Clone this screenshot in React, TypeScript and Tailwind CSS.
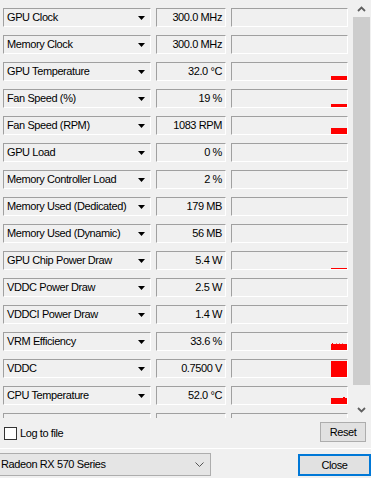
import React from 'react';

type Graph = 'none' | 'temp' | 'fan' | 'rpm' | 'line' | 'vrm' | 'vddc' | 'cpu';

const sensors: { label: string; value: string; graph: Graph }[] = [
    { label: 'GPU Clock', value: '300.0 MHz', graph: 'none' },
    { label: 'Memory Clock', value: '300.0 MHz', graph: 'none' },
    { label: 'GPU Temperature', value: '32.0 °C', graph: 'temp' },
    { label: 'Fan Speed (%)', value: '19 %', graph: 'fan' },
    { label: 'Fan Speed (RPM)', value: '1083 RPM', graph: 'rpm' },
    { label: 'GPU Load', value: '0 %', graph: 'none' },
    { label: 'Memory Controller Load', value: '2 %', graph: 'none' },
    { label: 'Memory Used (Dedicated)', value: '179 MB', graph: 'none' },
    { label: 'Memory Used (Dynamic)', value: '56 MB', graph: 'none' },
    { label: 'GPU Chip Power Draw', value: '5.4 W', graph: 'line' },
    { label: 'VDDC Power Draw', value: '2.5 W', graph: 'none' },
    { label: 'VDDCI Power Draw', value: '1.4 W', graph: 'none' },
    { label: 'VRM Efficiency', value: '33.6 %', graph: 'vrm' },
    { label: 'VDDC', value: '0.7500 V', graph: 'vddc' },
    { label: 'CPU Temperature', value: '52.0 °C', graph: 'cpu' },
    { label: 'System Memory Used', value: '4178 MB', graph: 'none' },
];

const sunken = 'h-[19px] border border-t-[#a0a0a0] border-l-[#a0a0a0] border-r-white border-b-white bg-[#f0f0f0]';

function GraphFill({ kind }: { kind: Graph }) {
    // 16px wide history strip at the right edge of the graph box
    if (kind === 'none') return null;
    if (kind === 'vrm') {
        return (
            <svg width="16" height="17" viewBox="0 0 16 17" className="block">
                <polygon
                    points="0,11 1,11 1,10 2,10 2,11 5,11 5,10 6,11 8,11 8,10 9,11 11,11 11,10 12,11 16,11 16,17 0,17"
                    fill="#ff0000"
                />
            </svg>
        );
    }
    if (kind === 'cpu') {
        return (
            <svg width="16" height="17" viewBox="0 0 16 17" className="block">
                <polygon points="0,11 12,11 12,10 14,10 14,11 16,11 16,17 0,17" fill="#ff0000" />
            </svg>
        );
    }
    const h = { temp: 'h-[4px]', fan: 'h-[3px]', rpm: 'h-[6px]', line: 'h-[1px]', vddc: 'h-[16px]' }[kind];
    return <div className={`w-[16px] bg-[#ff0000] ${h}`} />;
}

function Chevron({ up }: { up?: boolean }) {
    return (
        <svg width="9" height="6" viewBox="0 0 9 6" className="block">
            <path
                d={up ? 'M1 5 L4.5 1.5 L8 5' : 'M1 1 L4.5 4.5 L8 1'}
                fill="none"
                stroke="#606060"
                strokeWidth="1.8"
            />
        </svg>
    );
}

export default function App() {
    return (
        <div
            className="w-[371px] h-[478px] overflow-hidden bg-[#f0f0f0] text-black text-[11px] tracking-[-0.4px] leading-none"
            style={{ fontFamily: '"Liberation Sans", Arial, sans-serif' }}
        >
            {/* Sensor list */}
            <div className="flex h-[418px]">
                <div className="w-[352px] overflow-hidden pt-[8px] pl-[3px] flex flex-col gap-[8px]">
                    {sensors.map((s) => (
                        <div key={s.label} className="flex shrink-0">
                            <div className={`${sunken} w-[148px] flex items-center justify-between pl-[3px] pr-[5px]`}>
                                <span className="whitespace-nowrap">{s.label}</span>
                                <svg width="7" height="4" viewBox="0 0 7 4" className="block">
                                    <polygon points="0,0 7,0 3.5,4" fill="#000" />
                                </svg>
                            </div>
                            <div className={`${sunken} ml-[5px] w-[70px] flex items-center justify-end pr-[3px]`}>
                                <span className="whitespace-nowrap">{s.value}</span>
                            </div>
                            <div className={`${sunken} ml-[5px] w-[117px] flex items-end justify-end`}>
                                <GraphFill kind={s.graph} />
                            </div>
                        </div>
                    ))}
                </div>

                {/* Scrollbar */}
                <div className="ml-[1px] w-[17px] h-full flex flex-col bg-[#f0f0f0]">
                    <div className="h-[17px] flex items-center justify-center">
                        <Chevron up />
                    </div>
                    <div className="h-[368px] bg-[#cdcdcd]" />
                    <div className="mt-auto h-[17px] flex items-center justify-center">
                        <Chevron />
                    </div>
                </div>
            </div>

            {/* Log + Reset */}
            <div className="h-[30px] flex items-center justify-between pl-[4px] pr-[5px]">
                <label className="flex items-center gap-[3px] mt-[1px]">
                    <span className="w-[13px] h-[13px] border border-[#333333] bg-white" />
                    <span>Log to file</span>
                </label>
                <button className="w-[46px] h-[20px] -mt-[2px] border border-[#adadad] bg-[#e1e1e1] text-[11px] tracking-[-0.4px]">
                    Reset
                </button>
            </div>

            <div className="h-[1px] bg-white" />

            {/* Card selector + Close */}
            <div className="flex items-start justify-between pt-[4px]">
                <div className="w-[212px] h-[23px] -ml-[1px] border border-[#adadad] bg-[#e5e5e5] flex items-center justify-between pl-[1px] pr-[6px]">
                    <span>Radeon RX 570 Series</span>
                    <svg width="9" height="5" viewBox="0 0 9 5" className="block">
                        <path d="M0.5 0.5 L4.5 4.5 L8.5 0.5" fill="none" stroke="#555" strokeWidth="1" />
                    </svg>
                </div>
                <button className="w-[73px] h-[22px] mt-[1px] border-2 border-[#0078d7] bg-[#e1e1e1] text-[11px] tracking-[-0.4px]">
                    Close
                </button>
            </div>
        </div>
    );
}
